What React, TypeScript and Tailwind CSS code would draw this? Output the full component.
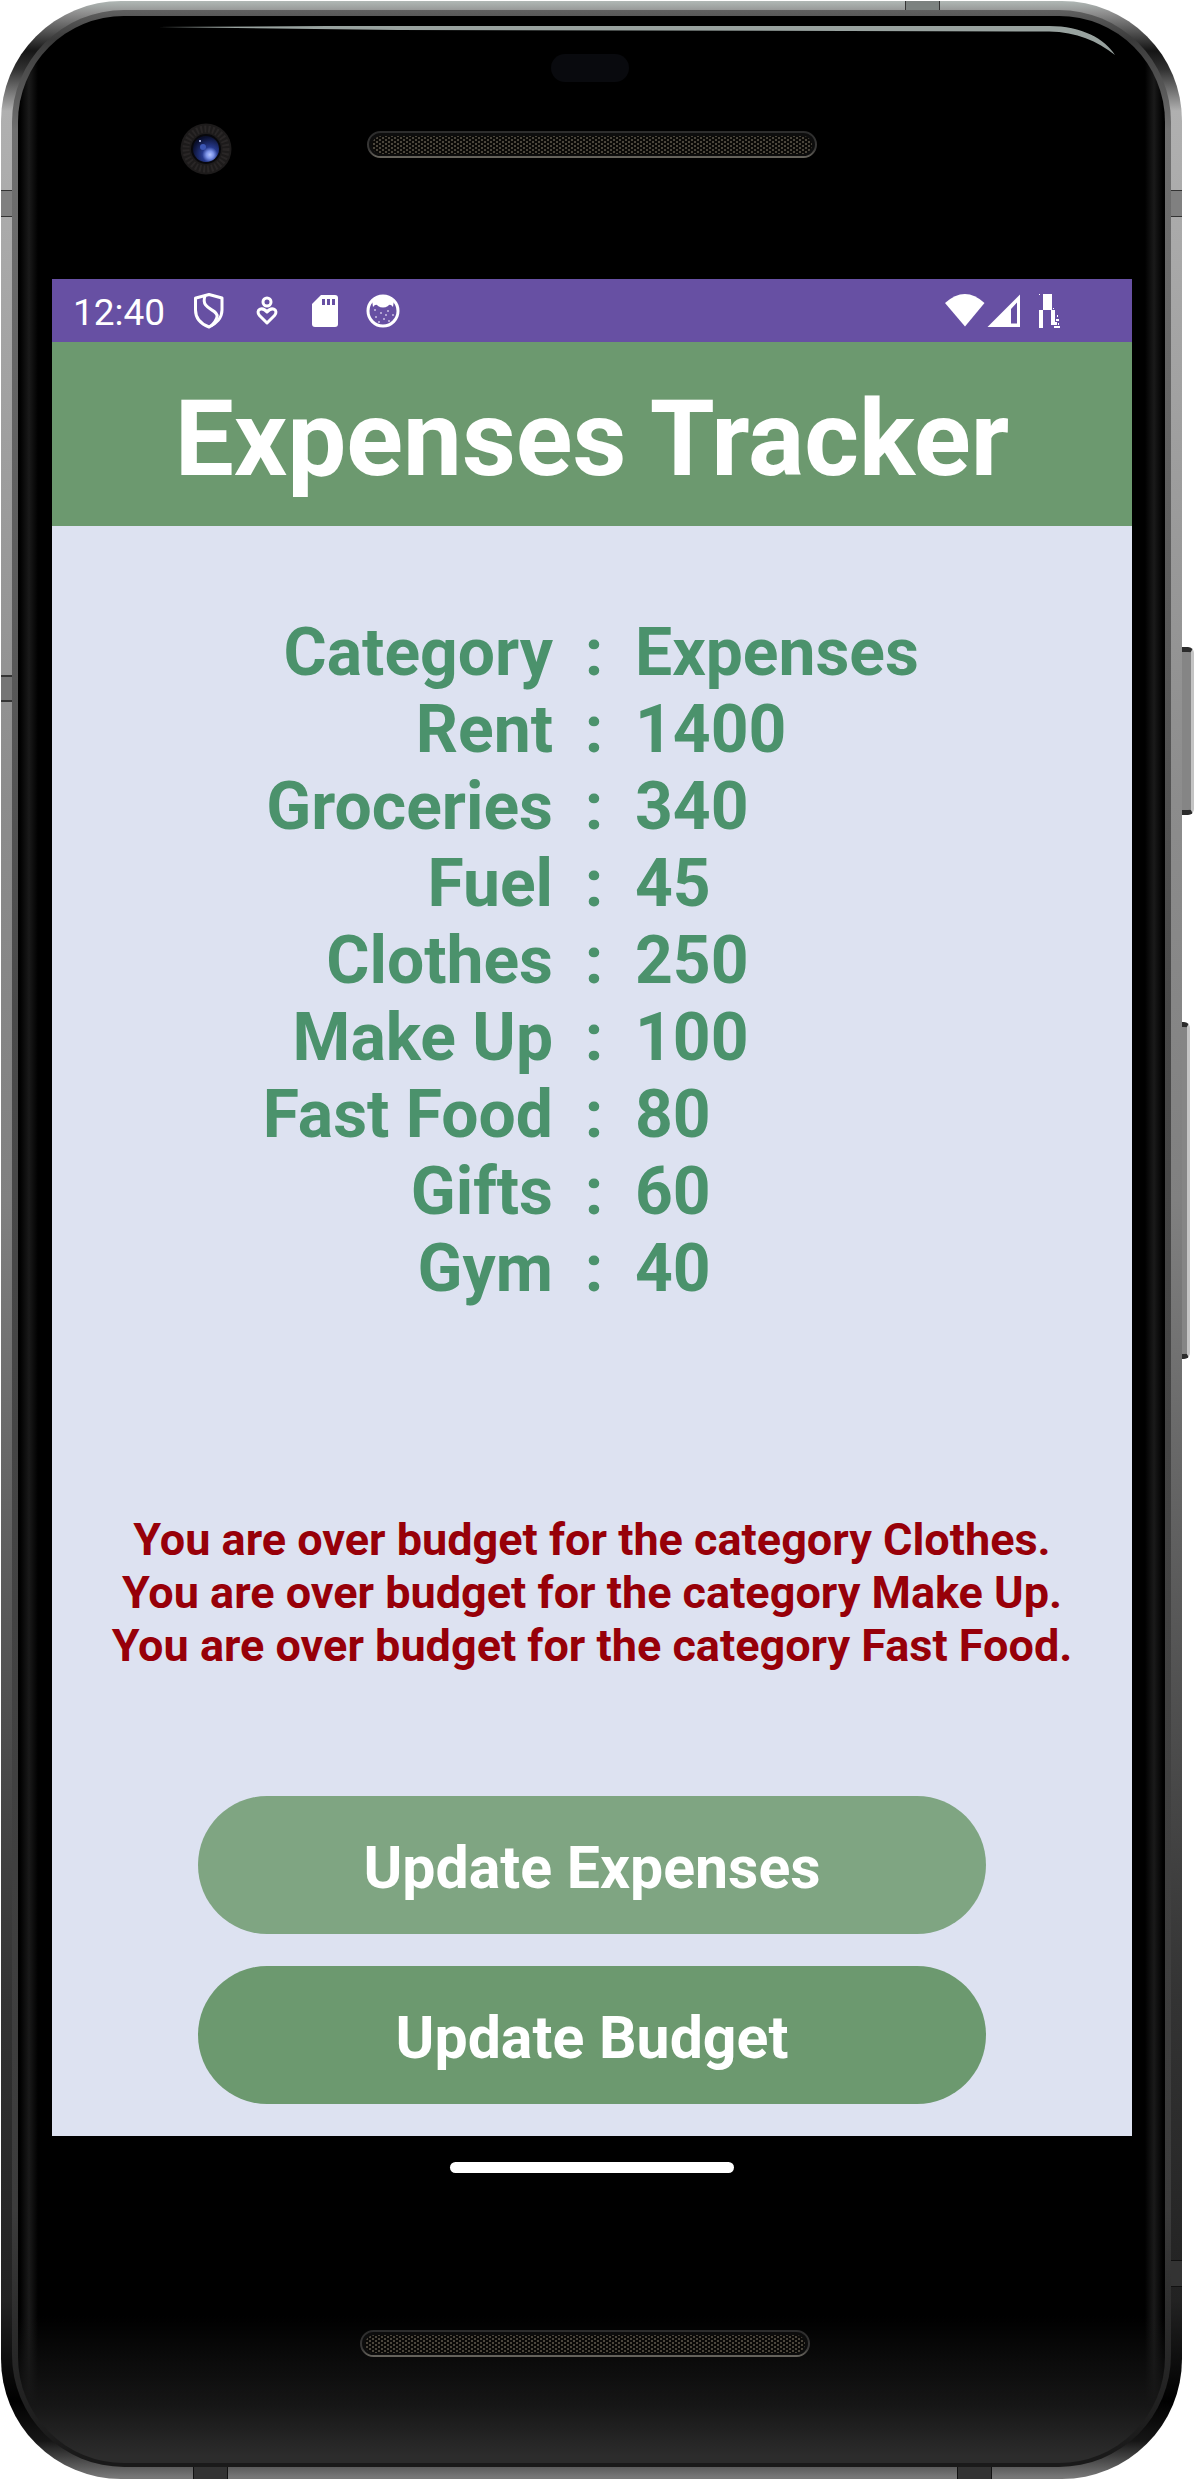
import React from 'react';

const expenses: [string, string][] = [
  ['Rent', '1400'],
  ['Groceries', '340'],
  ['Fuel', '45'],
  ['Clothes', '250'],
  ['Make Up', '100'],
  ['Fast Food', '80'],
  ['Gifts', '60'],
  ['Gym', '40'],
];

const overBudget = ['Clothes', 'Make Up', 'Fast Food'];

function Speaker({ id }: { id: string }) {
  return (
    <svg className="block h-7 w-[450px]" viewBox="0 0 450 28" aria-hidden="true">
      <defs>
        <pattern id={id} width="6" height="4" patternUnits="userSpaceOnUse">
          <rect width="6" height="4" fill="#0b0a08" />
          <rect x="0" y="0" width="2" height="2" fill="#4b463c" />
          <rect x="3" y="2" width="2" height="2" fill="#4b463c" />
        </pattern>
        <linearGradient id={id + '-rim'} x1="0" y1="0" x2="0" y2="1">
          <stop offset="0" stopColor="#2c2c2c" />
          <stop offset="0.7" stopColor="#3a3938" />
          <stop offset="1" stopColor="#66635c" />
        </linearGradient>
      </defs>
      <rect x="1" y="1" width="448" height="25" rx="12.5" fill="#0d0d0d" stroke={`url(#${id}-rim)`} strokeWidth="2" />
      <rect x="5" y="5" width="440" height="18" rx="9" fill={`url(#${id})`} />
    </svg>
  );
}

function Camera() {
  return (
    <svg className="block size-[52px]" viewBox="0 0 52 52" aria-hidden="true">
      <defs>
        <radialGradient id="lens" cx="0.65" cy="0.72" r="0.7">
          <stop offset="0" stopColor="#b4c4ff" />
          <stop offset="0.2" stopColor="#7c93e8" />
          <stop offset="0.42" stopColor="#26398c" />
          <stop offset="1" stopColor="#0a0f2c" />
        </radialGradient>
      </defs>
      <circle cx="26" cy="26" r="25.5" fill="#1d1b1b" />
      <circle cx="26" cy="26" r="20" fill="none" stroke="#292626" strokeWidth="7" strokeDasharray="2 2" />
      <circle cx="26" cy="26" r="15" fill="#08080c" />
      <circle cx="26" cy="26" r="13" fill="url(#lens)" />
      <circle cx="23" cy="24" r="3" fill="#3c56b4" />
      <circle cx="20" cy="18" r="1" fill="#c6d0ff" />
    </svg>
  );
}

function StatusBar() {
  return (
    <div className="flex h-[63px] items-center bg-[#6750a3] pr-[71px] pl-[21px] text-white">
      <span className="w-[113px] pt-1 text-[37px] leading-none">12:40</span>
      <svg className="h-9 w-[216px]" viewBox="0 0 216 36" aria-hidden="true">
        <g fill="none" stroke="#fff" strokeWidth="3">
          <path d="M10 5 L23 1.500 L36 5 V17 C36 25 30 31 23 34 C15 31 9.500 25 9.500 17 V5 Z" strokeLinejoin="round" />
          <path d="M19 3 C14 17 33 16 31 24 C30 28 27 31 25 33" />
          <circle cx="81" cy="9" r="4" />
          <path d="M81 30 L73.500 22.500 C69 17 76 13 81 19 C86 13 93 17 88.500 22.500 Z" strokeLinejoin="round" />
          <circle cx="197" cy="18" r="15" strokeWidth="3" />
        </g>
        <path d="M135 2 h14 a3 3 0 0 1 3 3 v26 a3 3 0 0 1 -3 3 h-20 a3 3 0 0 1 -3 -3 V11 Z" fill="#fff" />
        <path d="M136 6h3v6h-3zM141 6h3v6h-3zM146 6h3v6h-3z" fill="#6750a3" />
        <path d="M186 7 Q197 -1 208 7 L207 14 Q204 10 202 13 Q197 16 192 13 Q190 10 187 14 Z" fill="#fff" />
        <path d="M188 17h2M194 20h2M201 18h2M206 22h2M189 24h2M197 26h2M192 29h2M202 28h2M199 22h2" stroke="#c9bfe2" strokeWidth="1.500" />
      </svg>
      <svg className="ml-auto h-9 w-[116px]" viewBox="0 0 116 36" fill="#fff" aria-hidden="true">
        <path d="M0 10 Q20 -8 39.500 10 L20 33.500 Z" />
        <path fillRule="evenodd" d="M75 1.500 V34 H42.500 Z M72 9.500 L66 16 V30.500 H72 Z" />
        <path d="M98 1h9v16h3v15h-4V17h-8v18h-4V17h4z" />
        <path d="M94 1h1v1h-1zM108 15h1v1h-1zM112 22h1v2h-1zM111 26h3v2h-3zM110 29h2v3h-2zM113 30h1v2h-1zM109 33h6v2h-6z" />
      </svg>
    </div>
  );
}

function PhoneButton({ className }: { className: string }) {
  return (
    <span
      className={`absolute rounded-r-md border-y-[5px] border-r-[3px] border-y-[#2c2c2c] border-r-[#c4c4c4] bg-[#858585] ${className}`}
    />
  );
}

export default function App() {
  return (
    <div className="flex bg-white pt-px pr-3 pl-px font-[Roboto,sans-serif]">
      <div className="relative w-full rounded-[120px] bg-[linear-gradient(to_bottom,#b0b8b5_0,#8f8f8f_12px,#151515_50px,#303030_68px,#b0b0b0_110px,#8c8c8c_800px,#808080_1200px,#333_2000px,#222_2300px,#000_2400px,#161616_2440px,#777_2476px)] px-[11px] pt-[9px] pb-3">
        <PhoneButton className="top-[646px] -right-3 h-[168px] w-3" />
        <PhoneButton className="top-[1021px] -right-2 h-[337px] w-2" />
        <span className="absolute top-[189px] right-0 left-0 h-[27px] border-y border-[#333] bg-[#808080]" />
        <span className="absolute top-[674px] left-0 h-[27px] w-5 border-y-2 border-[#333] bg-[#757575]" />
        <span className="absolute right-0 bottom-[192px] h-[27px] w-5 border-y border-[#111] bg-[#333]" />
        <span className="absolute top-0 right-[242px] h-5 w-[35px] border-x border-[#333] bg-[#7c8280]" />
        <span className="absolute bottom-0 left-48 h-5 w-[35px] border-x border-[#111] bg-[#333]" />
        <span className="absolute right-[190px] bottom-0 h-5 w-[35px] border-x border-[#111] bg-[#333]" />
        <div className="relative rounded-[112px] bg-[linear-gradient(to_bottom,#606060_0,#3a3a3a_30px,#707070_120px,#4a4a4a_1000px,#3c3c3c_2200px,#1a1a1a_2440px)] px-[6px] pt-[6px] pb-1">
          <main className="relative flex flex-col rounded-[106px] bg-[linear-gradient(to_bottom,transparent_2300px,#161616_2390px,#2c2c2c_2440px),linear-gradient(to_right,#000_2px,#1a1a1a_11px,#000_20px,#000_calc(100%-20px),#1a1a1a_calc(100%-11px),#000_calc(100%-2px))] pr-[33px] pl-[34px]">
            <svg
              className="absolute top-[9px] right-[50px] left-[140px] h-8 w-[calc(100%-190px)]"
              viewBox="0 0 958 32"
              preserveAspectRatio="none"
              aria-hidden="true"
            >
              <path d="M0 2 L170 1 H892 C925 1 948 14 958 30 C940 16 920 7 892 6.500 L240 5 Z" fill="#98a29f" />
            </svg>
            <div className="relative h-[263px] shrink-0">
              <span className="absolute top-[107px] left-[128px]">
                <Camera />
              </span>
              <span className="absolute top-[38px] left-[499px] h-7 w-[78px] rounded-full bg-[#090a0e]" />
              <span className="absolute top-[115px] left-[315px]">
                <Speaker id="earpiece" />
              </span>
            </div>

            <section className="flex h-[1857px] flex-col bg-[#dde2f1]">
              <StatusBar />
              <header className="flex h-[184px] items-center justify-center bg-[#6c996f] pt-2.5">
                <h1 className="text-[105px] leading-none font-bold text-white">Expenses Tracker</h1>
              </header>

              <table className="mt-[88px] w-full text-[66px] leading-[77px] font-bold text-[#4b926c]">
                <thead>
                  <tr>
                    <th className="w-[501px] p-0 text-right font-bold">Category</th>
                    <th className="w-[82px] p-0 text-center font-bold">:</th>
                    <th className="p-0 text-left font-bold">Expenses</th>
                  </tr>
                </thead>
                <tbody>
                  {expenses.map(([name, amount]) => (
                    <tr key={name}>
                      <td className="p-0 text-right">{name}</td>
                      <td className="p-0 text-center">:</td>
                      <td className="p-0 text-left">{amount}</td>
                    </tr>
                  ))}
                </tbody>
              </table>

              <div className="mt-auto mb-[124px] text-center text-[45px] leading-[53px] font-bold text-[#970009]">
                {overBudget.map((name) => (
                  <p key={name}>You are over budget for the category {name}.</p>
                ))}
              </div>

              <div className="mx-auto mb-8 flex w-[73%] flex-col gap-8 text-[59px] leading-none font-bold text-white">
                <button type="button" className="h-[138px] rounded-full bg-[#7fa582] pt-1">
                  Update Expenses
                </button>
                <button type="button" className="h-[138px] rounded-full bg-[#6c996f] pt-1">
                  Update Budget
                </button>
              </div>
            </section>

            <div className="relative h-[327px] shrink-0">
              <span className="absolute top-[26px] left-1/2 h-[11px] w-[284px] -translate-x-1/2 rounded-full bg-white" />
              <span className="absolute top-[194px] left-[308px]">
                <Speaker id="loudspeaker" />
              </span>
            </div>
          </main>
        </div>
      </div>
    </div>
  );
}
